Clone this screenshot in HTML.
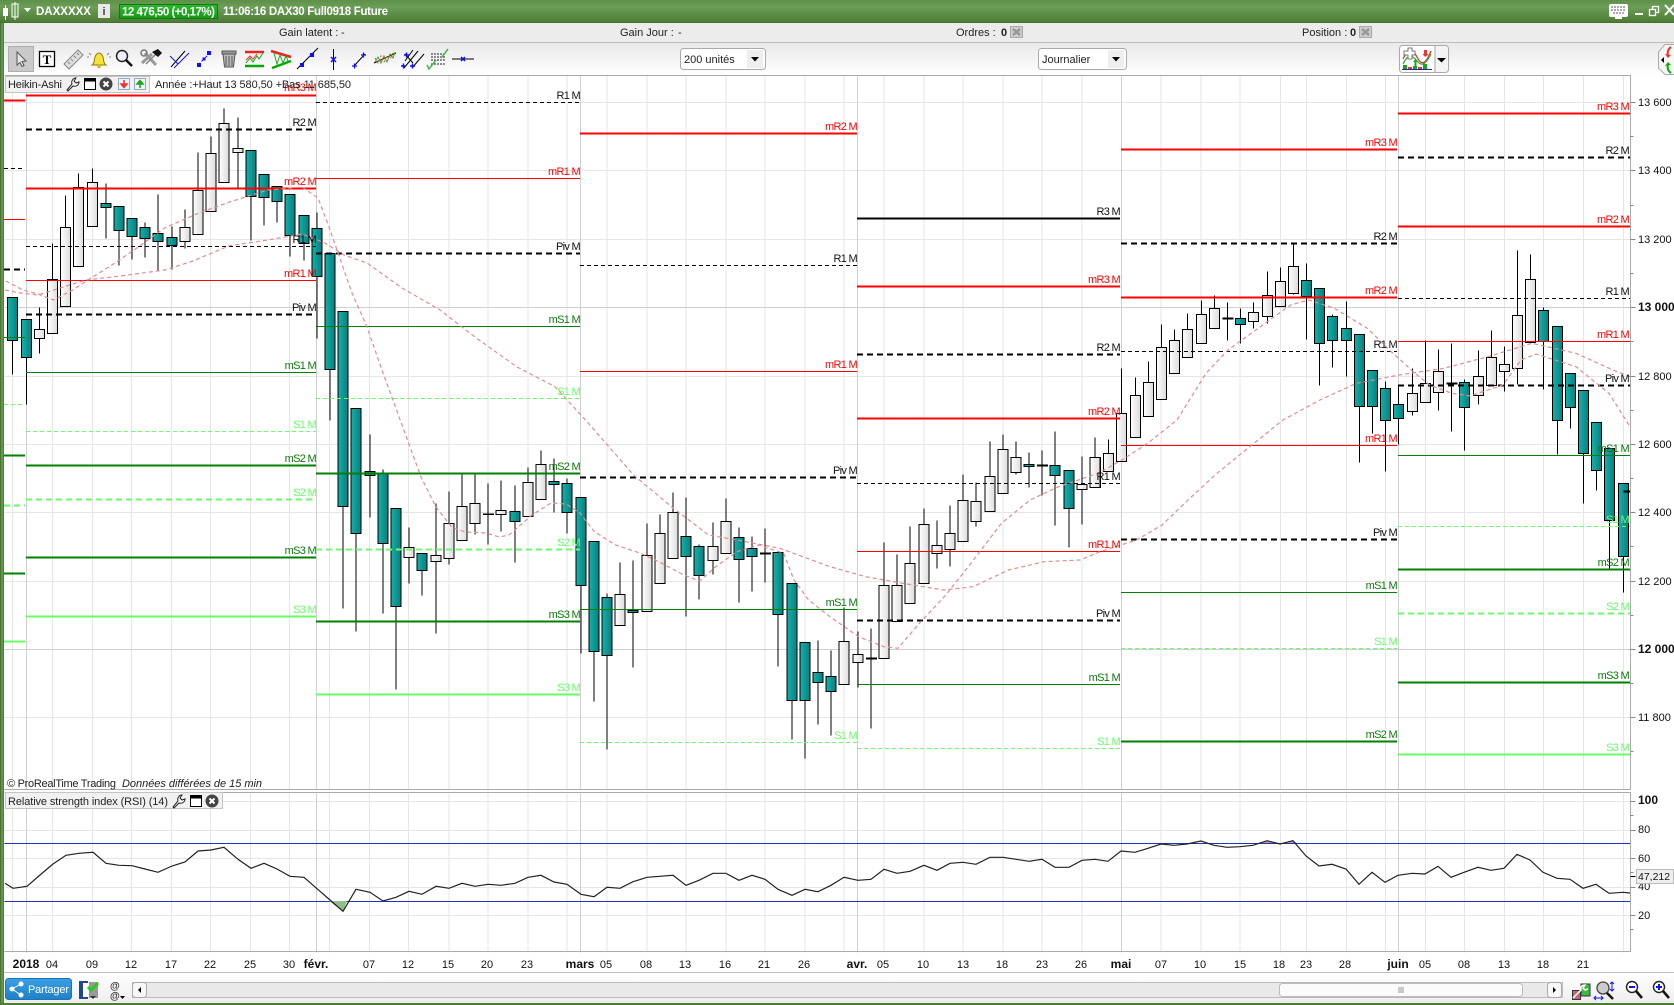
<!DOCTYPE html>
<html lang="fr"><head><meta charset="utf-8"><title>DAXXXXX</title>
<style>
html,body{margin:0;padding:0;background:#fff;width:1674px;height:1005px;overflow:hidden}
svg{display:block;font-family:"Liberation Sans",sans-serif}
.c rect.t{fill:url(#gt);stroke:#000}
.c rect.w{fill:url(#gw);stroke:#000}
.crisp{shape-rendering:crispEdges}
.lv path{fill:none}
.r1{stroke:#f00;stroke-width:1}.r2{stroke:#f00;stroke-width:2}
.k0{stroke:#000;stroke-width:2}
.k1{stroke:#000;stroke-width:1;stroke-dasharray:4 3}.k2{stroke:#000;stroke-width:2;stroke-dasharray:6 4}
.g1{stroke:#008000;stroke-width:1}.g2{stroke:#008000;stroke-width:2}
.l1{stroke:#66ff66;stroke-width:1;stroke-dasharray:4 3}.l2{stroke:#66ff66;stroke-width:2;stroke-dasharray:6 4}.l3{stroke:#66ff66;stroke-width:2}
.lb text{font-size:11px;letter-spacing:-.7px;text-anchor:end}
.tr{fill:#f00}.tk{fill:#111}.tg{fill:#0a7a0a}.tl{fill:#66ff66}
.ax text{font-size:11px;fill:#111}
.dt text{font-size:11px;fill:#111;text-anchor:middle}
.dt text.b{font-weight:bold;font-size:12px}
.ui text{font-size:11px;fill:#222}
</style></head><body>
<svg width="1674" height="1005" viewBox="0 0 1674 1005" xmlns="http://www.w3.org/2000/svg">
<defs>
<linearGradient id="gt" x1="0" x2="1" y1="0" y2="0"><stop offset="0" stop-color="#16b0aa"/><stop offset="1" stop-color="#07807f"/></linearGradient>
<linearGradient id="gw" x1="0" x2="1" y1="0" y2="0"><stop offset="0" stop-color="#ffffff"/><stop offset="1" stop-color="#dcdcdc"/></linearGradient>
<linearGradient id="gtop" x1="0" x2="0" y1="0" y2="1"><stop offset="0" stop-color="#5f9049"/><stop offset=".3" stop-color="#6b9e57"/><stop offset=".95" stop-color="#4e7c36"/><stop offset="1" stop-color="#3c6626"/></linearGradient>
<linearGradient id="gbar" x1="0" x2="0" y1="0" y2="1"><stop offset="0" stop-color="#e9e9e9"/><stop offset="1" stop-color="#ffffff"/></linearGradient>
<linearGradient id="gbot" x1="0" x2="0" y1="0" y2="1"><stop offset="0" stop-color="#ffffff"/><stop offset="1" stop-color="#eeeeee"/></linearGradient>
<linearGradient id="gpr" x1="0" x2="0" y1="0" y2="1"><stop offset="0" stop-color="#2cb82c"/><stop offset="1" stop-color="#149a16"/></linearGradient>
<linearGradient id="gsh" x1="0" x2="0" y1="0" y2="1"><stop offset="0" stop-color="#3aa0e4"/><stop offset="1" stop-color="#1f80c8"/></linearGradient>
<linearGradient id="gleft" x1="0" x2="1" y1="0" y2="0"><stop offset="0" stop-color="#3c6a28"/><stop offset=".5" stop-color="#6f9e5a"/><stop offset="1" stop-color="#477530"/></linearGradient>
<clipPath id="chartclip"><rect x="4" y="75" width="1626" height="714"/></clipPath>
</defs>

<!-- page base -->
<rect width="1674" height="1005" fill="#fff"/>

<!-- chart grid -->
<g class="crisp" transform="translate(.5 .5)">
<path transform="translate(-1 0) scale(1.0006 1)" d="M13 75V789M53 75V789M93 75V789M132 75V789M172 75V789M211 75V789M251 75V789M290 75V789M330 75V789M370 75V789M409 75V789M449 75V789M488 75V789M528 75V789M567 75V789M607 75V789M647 75V789M686 75V789M726 75V789M765 75V789M805 75V789M844 75V789M884 75V789M924 75V789M963 75V789M1003 75V789M1042 75V789M1082 75V789M1161 75V789M1201 75V789M1240 75V789M1280 75V789M1306 75V789M1346 75V789M1385 75V789M1425 75V789M1464 75V789M1504 75V789M1543 75V789M1583 75V789M1623 75V789" stroke="#e6e6e6" fill="none"/>
<path transform="translate(-1 0) scale(1.0006 1)" d="M13 793V952M53 793V952M93 793V952M132 793V952M172 793V952M211 793V952M251 793V952M290 793V952M330 793V952M370 793V952M409 793V952M449 793V952M488 793V952M528 793V952M567 793V952M607 793V952M647 793V952M686 793V952M726 793V952M765 793V952M805 793V952M844 793V952M884 793V952M924 793V952M963 793V952M1003 793V952M1042 793V952M1082 793V952M1161 793V952M1201 793V952M1240 793V952M1280 793V952M1306 793V952M1346 793V952M1385 793V952M1425 793V952M1464 793V952M1504 793V952M1543 793V952M1583 793V952M1623 793V952" stroke="#e6e6e6" fill="none"/>
<path d="M4 102H1630M4 170H1630M4 239H1630M4 376H1630M4 444H1630M4 512H1630M4 581H1630M4 717H1630" stroke="#e6e6e6" fill="none"/>
<path d="M4 307H1630M4 649H1630" stroke="#cfcfcf" fill="none"/>
<path d="M4 801H1630M4 830H1630M4 858H1630M4 887H1630M4 915H1630" stroke="#e6e6e6" fill="none"/>
<path d="M26 75V789M316 75V789M580 75V789M857 75V789M1121 75V789M1398 75V789M26 793V952M316 793V952M580 793V952M857 793V952M1121 793V952M1398 793V952" stroke="#d0d0d0" fill="none"/>
</g>

<!-- candles -->
<g class="c crisp" transform="translate(-.3 .5) scale(1.0005 1)" clip-path="url(#chartclip)">
<path stroke="#000" fill="none" d="M13 297V374M27 319V404M40 307V353M53 243V333M66 195V306M79 173V266M93 168V226M106 183V238M119 206V265M132 218V259M145 222V257M158 194V271M172 226V269M185 209V248M198 152V234M211 136V211M224 108V182M238 117V187M251 150V240M264 174V225M277 186V222M290 194V256M304 215V260M317 212V338M330 253V420M343 311V608M356 408V631M370 434V517M383 469V613M396 508V689M409 527V583M422 553V595M436 503V633M449 491V564M462 473V540M475 473V534M488 483V544M501 480V531M515 485V562M528 467V516M541 450V499M554 458V512M567 478V533M581 497V653M594 541V701M607 593V749M620 562V625M633 560V667M647 523V611M660 514V583M673 492V558M686 497V616M699 544V599M713 522V574M726 498V553M739 527V602M752 536V591M765 528V582M778 552V666M792 583V739M805 642V758M818 640V724M831 650V735M844 607V684M858 631V687M871 628V728M884 542V658M897 554V621M910 526V603M924 508V583M937 520V568M950 505V566M963 474V541M976 482V526M990 441V511M1003 434V493M1016 441V474M1029 452V487M1042 450V495M1055 431V525M1069 470V547M1082 456V524M1095 437V487M1108 439V471M1121 368V461M1135 377V437M1148 361V416M1161 324V399M1174 329V373M1187 313V357M1201 300V343M1214 295V328M1227 302V340M1240 308V343M1253 302V328M1267 271V323M1280 267V306M1293 243V294M1306 263V339M1319 288V385M1332 314V367M1346 301V376M1359 334V462M1372 370V433M1385 381V471M1398 385V444M1412 368V415M1425 340V402M1438 349V410M1451 343V431M1464 379V450M1478 350V404M1491 330V385M1504 346V391M1517 250V384M1530 254V342M1543 307V389M1557 326V454M1570 373V428M1583 390V503M1596 422V490M1609 448V568M1623 483V592"/>
<rect class="t" x="8" y="297" width="10" height="43"/><rect class="t" x="22" y="319" width="10" height="38"/><rect class="w" x="35" y="329" width="10" height="9"/><rect class="w" x="48" y="279" width="10" height="54"/><rect class="w" x="61" y="227" width="10" height="79"/><rect class="w" x="74" y="187" width="10" height="79"/><rect class="w" x="88" y="182" width="10" height="44"/><rect class="t" x="101" y="203" width="10" height="4"/><rect class="t" x="114" y="206" width="10" height="24"/><rect class="t" x="127" y="218" width="10" height="18"/><rect class="t" x="140" y="227" width="10" height="11"/><rect class="t" x="153" y="233" width="10" height="8"/><rect class="t" x="167" y="237" width="10" height="8"/><rect class="w" x="180" y="227" width="10" height="14"/><rect class="w" x="193" y="190" width="10" height="44"/><rect class="w" x="206" y="153" width="10" height="58"/><rect class="w" x="219" y="123" width="10" height="59"/><rect class="w" x="233" y="148" width="10" height="4"/><rect class="t" x="246" y="150" width="10" height="46"/><rect class="t" x="259" y="174" width="10" height="23"/><rect class="t" x="272" y="186" width="10" height="15"/><rect class="t" x="285" y="194" width="10" height="41"/><rect class="t" x="299" y="215" width="10" height="28"/><rect class="t" x="312" y="228" width="10" height="48"/><rect class="t" x="325" y="253" width="10" height="116"/><rect class="t" x="338" y="311" width="10" height="195"/><rect class="t" x="351" y="408" width="10" height="125"/><rect class="t" x="365" y="471" width="10" height="4"/><rect class="t" x="378" y="473" width="10" height="70"/><rect class="t" x="391" y="508" width="10" height="98"/><rect class="w" x="404" y="547" width="10" height="10"/><rect class="t" x="417" y="553" width="10" height="17"/><rect class="w" x="431" y="555" width="10" height="6"/><rect class="w" x="444" y="523" width="10" height="35"/><rect class="w" x="457" y="506" width="10" height="34"/><rect class="w" x="470" y="503" width="10" height="20"/><rect x="483" y="513" width="11" height="1.5" fill="#000"/><rect class="w" x="496" y="510" width="10" height="4"/><rect class="t" x="510" y="511" width="10" height="10"/><rect class="w" x="523" y="482" width="10" height="34"/><rect class="w" x="536" y="464" width="10" height="35"/><rect class="t" x="549" y="481" width="10" height="3"/><rect class="t" x="562" y="483" width="10" height="29"/><rect class="t" x="576" y="497" width="10" height="88"/><rect class="t" x="589" y="541" width="10" height="110"/><rect class="t" x="602" y="597" width="10" height="58"/><rect class="w" x="615" y="594" width="10" height="31"/><rect class="t" x="628" y="610" width="10" height="2"/><rect class="w" x="642" y="555" width="10" height="56"/><rect class="w" x="655" y="533" width="10" height="50"/><rect class="w" x="668" y="512" width="10" height="46"/><rect class="t" x="681" y="536" width="10" height="20"/><rect class="t" x="694" y="546" width="10" height="29"/><rect class="w" x="708" y="546" width="10" height="14"/><rect class="w" x="721" y="521" width="10" height="32"/><rect class="t" x="734" y="537" width="10" height="22"/><rect class="t" x="747" y="548" width="10" height="8"/><rect x="760" y="552" width="11" height="2" fill="#000"/><rect class="t" x="773" y="552" width="10" height="62"/><rect class="t" x="787" y="583" width="10" height="117"/><rect class="t" x="800" y="642" width="10" height="58"/><rect class="t" x="813" y="672" width="10" height="10"/><rect class="t" x="826" y="676" width="10" height="15"/><rect class="w" x="839" y="641" width="10" height="43"/><rect class="w" x="853" y="654" width="10" height="8"/><rect x="866" y="657" width="11" height="2" fill="#000"/><rect class="w" x="879" y="585" width="10" height="73"/><rect class="w" x="892" y="585" width="10" height="36"/><rect class="w" x="905" y="563" width="10" height="40"/><rect class="w" x="919" y="524" width="10" height="59"/><rect class="w" x="932" y="545" width="10" height="8"/><rect class="w" x="945" y="533" width="10" height="16"/><rect class="w" x="958" y="500" width="10" height="41"/><rect class="w" x="971" y="501" width="10" height="20"/><rect class="w" x="985" y="476" width="10" height="35"/><rect class="w" x="998" y="449" width="10" height="44"/><rect class="w" x="1011" y="457" width="10" height="15"/><rect class="t" x="1024" y="464" width="10" height="2"/><rect x="1037" y="464" width="11" height="2" fill="#000"/><rect class="t" x="1050" y="465" width="10" height="10"/><rect class="t" x="1064" y="470" width="10" height="38"/><rect class="w" x="1077" y="484" width="10" height="5"/><rect class="w" x="1090" y="457" width="10" height="30"/><rect class="w" x="1103" y="453" width="10" height="18"/><rect class="w" x="1116" y="413" width="10" height="48"/><rect class="w" x="1130" y="395" width="10" height="42"/><rect class="w" x="1143" y="382" width="10" height="34"/><rect class="w" x="1156" y="347" width="10" height="52"/><rect class="w" x="1169" y="340" width="10" height="33"/><rect class="w" x="1182" y="329" width="10" height="28"/><rect class="w" x="1196" y="314" width="10" height="29"/><rect class="w" x="1209" y="308" width="10" height="20"/><rect x="1222" y="317" width="11" height="2" fill="#000"/><rect class="t" x="1235" y="318" width="10" height="6"/><rect class="w" x="1248" y="312" width="10" height="9"/><rect class="w" x="1262" y="295" width="10" height="21"/><rect class="w" x="1275" y="281" width="10" height="25"/><rect class="w" x="1288" y="266" width="10" height="27"/><rect class="t" x="1301" y="280" width="10" height="16"/><rect class="t" x="1314" y="288" width="10" height="55"/><rect class="t" x="1327" y="316" width="10" height="24"/><rect class="t" x="1341" y="328" width="10" height="12"/><rect class="t" x="1354" y="334" width="10" height="72"/><rect class="t" x="1367" y="370" width="10" height="36"/><rect class="t" x="1380" y="388" width="10" height="32"/><rect class="t" x="1393" y="404" width="10" height="14"/><rect class="w" x="1407" y="393" width="10" height="18"/><rect class="w" x="1420" y="383" width="10" height="19"/><rect class="w" x="1433" y="371" width="10" height="21"/><rect x="1446" y="382" width="11" height="2" fill="#000"/><rect class="t" x="1459" y="382" width="10" height="25"/><rect class="w" x="1473" y="376" width="10" height="19"/><rect class="w" x="1486" y="357" width="10" height="28"/><rect class="w" x="1499" y="364" width="10" height="7"/><rect class="w" x="1512" y="315" width="10" height="53"/><rect class="w" x="1525" y="279" width="10" height="63"/><rect class="t" x="1538" y="310" width="10" height="31"/><rect class="t" x="1552" y="326" width="10" height="94"/><rect class="t" x="1565" y="373" width="10" height="34"/><rect class="t" x="1578" y="390" width="10" height="63"/><rect class="t" x="1591" y="422" width="10" height="48"/><rect class="t" x="1604" y="448" width="10" height="72"/><rect class="t" x="1618" y="483" width="10" height="73"/>
<rect x="1623" y="490" width="7" height="2" fill="#000"/>
</g>

<!-- pivot level lines -->
<g clip-path="url(#chartclip)"><g class="lv crisp" transform="translate(0 .5)">
<!-- region 0 -->
<path class="r2" d="M4 100H25"/><path class="k1" d="M4 168H25"/><path class="r1" d="M4 219H25"/><path class="k2" d="M4 269H25"/><path class="g1" d="M4 337H25"/><path class="l1" d="M4 404H25"/><path class="g2" d="M4 455H25"/><path class="l2" d="M4 505H25"/><path class="g2" d="M4 573H25"/><path class="l3" d="M4 641H25"/>
<!-- region 1 -->
<path class="r2" d="M26 95H316"/><path class="k2" d="M26 129H316"/><path class="r2" d="M26 188H316"/><path class="k1" d="M26 246H316"/><path class="r1" d="M26 280H316"/><path class="k2" d="M26 314H316"/><path class="g1" d="M26 372H316"/><path class="l1" d="M26 431H316"/><path class="g2" d="M26 465H316"/><path class="l2" d="M26 499H316"/><path class="g2" d="M26 557H316"/><path class="l3" d="M26 616H316"/>
<!-- region 2 -->
<path class="k1" d="M316 102H580"/><path class="r1" d="M316 178H580"/><path class="k2" d="M316 253H580"/><path class="g1" d="M316 326H580"/><path class="l1" d="M316 398H580"/><path class="g2" d="M316 473H580"/><path class="l2" d="M316 549H580"/><path class="g2" d="M316 621H580"/><path class="l3" d="M316 694H580"/>
<!-- region 3 -->
<path class="r2" d="M580 133H857"/><path class="k1" d="M580 265H857"/><path class="r1" d="M580 371H857"/><path class="k2" d="M580 477H857"/><path class="g1" d="M580 609H857"/><path class="l1" d="M580 742H857"/>
<!-- region 4 -->
<path class="k0" d="M857 218H1120"/><path class="r2" d="M857 286H1120"/><path class="k2" d="M857 354H1120"/><path class="r2" d="M857 418H1120"/><path class="k1" d="M857 483H1120"/><path class="r1" d="M857 551H1120"/><path class="k2" d="M857 620H1120"/><path class="g1" d="M857 684H1120"/><path class="l1" d="M857 748H1120"/>
<!-- region 5 -->
<path class="r2" d="M1121 149H1397"/><path class="k2" d="M1121 243H1397"/><path class="r2" d="M1121 297H1397"/><path class="k1" d="M1121 351H1397"/><path class="r1" d="M1121 445H1397"/><path class="k2" d="M1121 539H1397"/><path class="g1" d="M1121 592H1397"/><path class="l1" d="M1121 648H1397"/><path class="g2" d="M1121 741H1397"/>
<!-- region 6 -->
<path class="r2" d="M1398 113H1630"/><path class="k2" d="M1398 157H1630"/><path class="r2" d="M1398 226H1630"/><path class="k1" d="M1398 298H1630"/><path class="r1" d="M1398 341H1630"/><path class="k2" d="M1398 385H1630"/><path class="g1" d="M1398 455H1630"/><path class="l1" d="M1398 526H1630"/><path class="g2" d="M1398 569H1630"/><path class="l2" d="M1398 613H1630"/><path class="g2" d="M1398 682H1630"/><path class="l3" d="M1398 754H1630"/>
</g></g>

<!-- moving averages -->
<g fill="none" stroke="#e38c8c" stroke-width="1.2" stroke-dasharray="4 3" clip-path="url(#chartclip)">
<polyline points="5.7,281 23,290 38,294 53.6,300 72.7,290 88,280 115,263 134,250 164.6,228 199,213 229.6,202 268,190 302,187 318,198 329,227 337,250 352,293 367,327 383,373 402,425 421,477 436,507 451.6,527 465,532 486,533 499.4,537 509,535 532,515 551,503 566,504 580,513 594.3,531.7 615.7,545 640.7,553.3 662,563.3 683.6,575 699.6,581 715.7,566.7 737,551.7 758.6,545 783.6,553.3 794,580 808.6,600 830,616.7 858.6,636.7 883.6,646.7 898,648.3 919.3,623.3 944.3,596.7 965.7,570 983.6,546.7 1001.4,523.3 1030,500 1058.6,486.7 1098,473.3 1122,460 1147.6,443.3 1177,420 1206,373.3 1228,350 1246.5,336.7 1272,318.3 1290.5,305 1308.8,300 1334.4,308.3 1367.4,328.3 1389.4,350 1415,373.3 1429.7,385 1451.6,393.3 1470,396 1503,385 1521,360 1536,354 1576,366.7 1609,393.3 1630,426.7"/>
<polyline points="5,290 20,293 38,295 60,288 86,280 115,276.7 164.6,270 191,261.7 229.6,245.7 268,240 302,234 325,243 344,255 367,263 402,288 440,310 474.5,336.7 516.6,366.7 555,386.7 587,421.7 633.6,475 673,508 708.6,535 737,540 780,548.3 830,566.7 865.7,576.7 901,583 944,590 973,586.7 1008.6,570 1044,561.7 1080,560 1100,551.7 1136.6,540 1162,525 1188,500 1217,473.3 1254,443.3 1283,420 1320,400 1356.4,383.3 1399,375 1444,368.3 1488,356.7 1532,343.3 1576,353.3 1613,370 1630,376.7"/>
</g>

<!-- level labels -->
<g class="lb" transform="translate(0 -1)">
<g text-anchor="end">
<text class="tr" x="316" y="92">mR3 M</text><text class="tk" x="316" y="127">R2 M</text><text class="tr" x="316" y="186">mR2 M</text><text class="tk" x="316" y="244">R1 M</text><text class="tr" x="316" y="278">mR1 M</text><text class="tk" x="316" y="312">Piv M</text><text class="tg" x="316" y="370">mS1 M</text><text class="tl" x="316" y="429">S1 M</text><text class="tg" x="316" y="463">mS2 M</text><text class="tl" x="316" y="497">S2 M</text><text class="tg" x="316" y="555">mS3 M</text><text class="tl" x="316" y="614">S3 M</text>
<text class="tk" x="580" y="100">R1 M</text><text class="tr" x="580" y="176">mR1 M</text><text class="tk" x="580" y="251">Piv M</text><text class="tg" x="580" y="324">mS1 M</text><text class="tl" x="580" y="396">S1 M</text><text class="tg" x="580" y="471">mS2 M</text><text class="tl" x="580" y="547">S2 M</text><text class="tg" x="580" y="619">mS3 M</text><text class="tl" x="580" y="692">S3 M</text>
<text class="tr" x="857" y="131">mR2 M</text><text class="tk" x="857" y="263">R1 M</text><text class="tr" x="857" y="369">mR1 M</text><text class="tk" x="857" y="475">Piv M</text><text class="tg" x="857" y="607">mS1 M</text><text class="tl" x="857" y="740">S1 M</text>
<text class="tk" x="1120" y="216">R3 M</text><text class="tr" x="1120" y="284">mR3 M</text><text class="tk" x="1120" y="352">R2 M</text><text class="tr" x="1120" y="416">mR2 M</text><text class="tk" x="1120" y="481">R1 M</text><text class="tr" x="1120" y="549">mR1 M</text><text class="tk" x="1120" y="618">Piv M</text><text class="tg" x="1120" y="682">mS1 M</text><text class="tl" x="1120" y="746">S1 M</text>
<text class="tr" x="1397" y="147">mR3 M</text><text class="tk" x="1397" y="241">R2 M</text><text class="tr" x="1397" y="295">mR2 M</text><text class="tk" x="1397" y="349">R1 M</text><text class="tr" x="1397" y="443">mR1 M</text><text class="tk" x="1397" y="537">Piv M</text><text class="tg" x="1397" y="590">mS1 M</text><text class="tl" x="1397" y="646">S1 M</text><text class="tg" x="1397" y="739">mS2 M</text>
<text class="tr" x="1629" y="111">mR3 M</text><text class="tk" x="1629" y="155">R2 M</text><text class="tr" x="1629" y="224">mR2 M</text><text class="tk" x="1629" y="296">R1 M</text><text class="tr" x="1629" y="339">mR1 M</text><text class="tk" x="1629" y="383">Piv M</text><text class="tg" x="1629" y="453">mS1 M</text><text class="tl" x="1629" y="524">S1 M</text><text class="tg" x="1629" y="567">mS2 M</text><text class="tl" x="1629" y="611">S2 M</text><text class="tg" x="1629" y="680">mS3 M</text><text class="tl" x="1629" y="752">S3 M</text>
</g></g>

<!-- RSI -->
<g class="crisp" transform="translate(.5 .5)"><path d="M4 843H1630M4 901H1630" stroke="#2233bb" stroke-width="1.3" fill="none"/></g>
<polygon points="329,901 343,911.5 347,901" fill="#8fbf8f"/>
<polygon points="1262,843 1267,840.7 1273,843" fill="#c99"/><polygon points="1288,843 1293,840.7 1297,843" fill="#c99"/>
<polyline fill="none" stroke="#222" stroke-width="1.2" points="5,883.3 13,888.3 27,886.3 40,875 53,864 66,855.3 79,853.3 93,852.3 106,863.3 119,865.3 132,865.7 145,869 158,872.3 172,866 185,862 198,851 211,850 224,847.3 238,859.3 251,868.3 264,863.3 277,869 290,876.3 304,877.3 317,888.7 330,900 343,911.3 356,889.3 370,892.3 383,901 396,897.3 409,891.3 422,894.3 436,886.3 449,888.3 462,883.3 475,886.3 488,884.3 501,885.3 515,883.3 528,877.3 541,875.3 554,882 567,884.3 581,894.3 594,896.7 607,887.3 620,888.3 633,881.7 647,877.3 660,876.3 673,875.3 686,885.3 699,880.3 713,873.3 726,873.3 739,880.3 752,875.3 765,879.3 778,889.3 792,895.3 805,889.3 818,891.7 831,885.3 844,877.3 858,880.3 871,879.3 884,869.3 897,873.3 910,871.3 924,865.3 937,870.3 950,863.3 963,862.3 976,864.3 990,857.3 1003,857.3 1016,859.3 1029,861.3 1042,859.3 1055,867.3 1069,867.3 1082,860.3 1095,859.3 1108,861.3 1121,851 1135,852.3 1148,848.3 1161,844 1174,845.3 1187,844 1201,841 1214,845.3 1227,847.3 1240,846.7 1253,845.3 1267,840.7 1280,844 1293,840.7 1306,856 1319,866 1332,864.3 1346,869 1359,884.3 1372,872.3 1385,882.3 1398,875.3 1412,873.3 1425,874 1438,866.3 1451,877.3 1464,872.3 1478,867.3 1491,870.3 1504,868.3 1517,854.3 1530,860 1543,872.3 1557,878.3 1570,879.3 1583,888.3 1596,884.3 1609,893.3 1623,892.3 1630,893"/>

<!-- panel frames -->
<g class="crisp" transform="translate(.5 .5)" fill="none" stroke="#aaaaaa">
<path d="M4 75H1630V789H4"/><path d="M4 792H1630V951H4"/>
<path d="M4 972H1674" stroke="#bdbdbd"/>
</g>

<!-- axis ticks -->
<g class="crisp" transform="translate(.5 .5)" stroke="#888" fill="none">
<path d="M1630 102h5M1630 170h5M1630 239h5M1630 307h5M1630 376h5M1630 444h5M1630 512h5M1630 581h5M1630 649h5M1630 717h5M1630 136h3M1630 205h3M1630 273h3M1630 341h3M1630 410h3M1630 478h3M1630 546h3M1630 615h3M1630 683h3M1630 751h3"/>
<path d="M1630 801h5M1630 830h5M1630 858h5M1630 887h5M1630 915h5M1630 815h3M1630 872h3M1630 929h3"/>
<path d="M1630 876h5" stroke="#000"/>
</g>
<g class="ax">
<text x="1638" y="106">13 600</text><text x="1638" y="174">13 400</text><text x="1638" y="243">13 200</text><text x="1638" y="311" font-weight="bold" style="font-size:12px">13 000</text><text x="1638" y="380">12 800</text><text x="1638" y="448">12 600</text><text x="1638" y="516">12 400</text><text x="1638" y="585">12 200</text><text x="1638" y="653" font-weight="bold" style="font-size:12px">12 000</text><text x="1638" y="721">11 800</text>
<text x="1638" y="804" font-weight="bold" style="font-size:12px">100</text><text x="1638" y="833">80</text><text x="1638" y="862">60</text><text x="1638" y="890">40</text><text x="1638" y="919">20</text>
</g>
<rect x="1636.5" y="869.5" width="37" height="14" fill="#eeeeee" stroke="#bbbbbb" class="crisp"/>
<g class="ax"><text x="1638" y="880" style="font-size:10.5px">47,212</text></g>

<!-- date axis -->
<g class="dt">
<text class="b" x="26" y="968">2018</text><text x="52" y="968">04</text><text x="92" y="968">09</text><text x="131" y="968">12</text><text x="171" y="968">17</text><text x="210" y="968">22</text><text x="250" y="968">25</text><text x="289" y="968">30</text><text class="b" x="316" y="968">févr.</text><text x="369" y="968">07</text><text x="408" y="968">12</text><text x="448" y="968">15</text><text x="487" y="968">20</text><text x="527" y="968">23</text><text class="b" x="580" y="968">mars</text><text x="606" y="968">05</text><text x="646" y="968">08</text><text x="685" y="968">13</text><text x="725" y="968">16</text><text x="764" y="968">21</text><text x="804" y="968">26</text><text class="b" x="857" y="968">avr.</text><text x="883" y="968">05</text><text x="923" y="968">10</text><text x="963" y="968">13</text><text x="1002" y="968">18</text><text x="1042" y="968">23</text><text x="1081" y="968">26</text><text class="b" x="1121" y="968">mai</text><text x="1161" y="968">07</text><text x="1200" y="968">10</text><text x="1240" y="968">15</text><text x="1279" y="968">18</text><text x="1306" y="968">23</text><text x="1345" y="968">28</text><text class="b" x="1398" y="968">juin</text><text x="1425" y="968">05</text><text x="1464" y="968">08</text><text x="1504" y="968">13</text><text x="1543" y="968">18</text><text x="1583" y="968">21</text>
</g>

<!-- footer text in chart -->
<g class="ui">
<text x="7" y="787" textLength="109">© ProRealTime Trading</text>
<text x="122" y="787" font-style="italic" textLength="140">Données différées de 15 min</text>
</g>

<!-- legend price -->
<rect x="5.5" y="76.5" width="144" height="16" fill="#f1f1f1" stroke="#c4c4c4" class="crisp"/>
<g class="ui"><text x="8" y="88" textLength="54">Heikin-Ashi</text>
<text x="155" y="88" textLength="196">Année :+Haut 13 580,50 +Bas 11 685,50</text></g>
<path d="M67 90l5-6c-1-3 1-6 4-6l-2 3 2 2 3-1c0 3-3 5-6 4l-5 5z" fill="#fff" stroke="#222" stroke-width="1"/>
<rect x="84.5" y="78.5" width="11" height="11" fill="#fff" stroke="#000"/><rect x="84" y="78" width="12" height="3.5" fill="#000"/>
<circle cx="106" cy="84" r="6.5" fill="#444"/><path d="M103.5 81.5l5 5m0-5l-5 5" stroke="#fff" stroke-width="2"/>
<rect x="118.5" y="78.5" width="11" height="11" fill="#eef3fa" stroke="#9ab"/><path d="M124 80v5M121 84h6l-3 3.5z" stroke="#e33" fill="#e33" stroke-width="1.5"/>
<rect x="134.5" y="78.5" width="11" height="11" fill="#eef3fa" stroke="#9ab"/><path d="M140 88v-5M137 84h6l-3-3.5z" stroke="#1a1" fill="#1a1" stroke-width="1.5"/>

<!-- legend rsi -->
<rect x="5.5" y="792.5" width="217" height="16" fill="#f1f1f1" stroke="#c4c4c4" class="crisp"/>
<g class="ui"><text x="8" y="805" textLength="160">Relative strength index (RSI) (14)</text></g>
<path d="M173 807l5-6c-1-3 1-6 4-6l-2 3 2 2 3-1c0 3-3 5-6 4l-5 5z" fill="#fff" stroke="#222" stroke-width="1"/>
<rect x="190.5" y="795.5" width="11" height="11" fill="#fff" stroke="#000"/><rect x="190" y="795" width="12" height="3.5" fill="#000"/>
<circle cx="212" cy="801" r="6.5" fill="#444"/><path d="M209.5 798.5l5 5m0-5l-5 5" stroke="#fff" stroke-width="2"/>

<!-- top bar -->
<rect x="0" y="0" width="1674" height="23" fill="url(#gtop)"/>
<rect x="3" y="8" width="5" height="8" fill="#fff"/><path d="M5.5 5v15" stroke="#fff"/><rect x="12" y="4" width="6" height="13" fill="#6b9e57" stroke="#fff"/><path d="M15 2v18" stroke="#fff"/>
<path d="M24 8h7l-3.500 4z" fill="#fff"/>
<text x="36" y="15" fill="#fff" font-weight="bold" style="font-size:11.5px">DAXXXXX</text>
<rect x="98" y="4" width="12" height="14" fill="#e8e8e8"/><text x="104" y="15" text-anchor="middle" font-weight="bold" fill="#445" style="font-size:11px">i</text>
<rect x="119.500" y="4.500" width="98" height="14" fill="url(#gpr)" stroke="#0c7e10" class="crisp"/>
<text x="122" y="15.500" fill="#fff" font-weight="bold" textLength="93" style="font-size:11.5px">12 476,50 (+0,17%)</text>
<text x="223" y="15" fill="#fff" font-weight="bold" textLength="165" style="font-size:11.500px">11:06:16  DAX30 Full0918 Future</text>
<rect x="1609" y="4" width="19" height="13" rx="2" fill="#fff"/><path d="M1611 7h15M1611 10h15M1613 13h11" stroke="#556" stroke-dasharray="2 1" fill="none"/><path d="M1615 17h7v2h-7z" fill="#fff"/>
<path d="M1635 14h8" stroke="#fff" stroke-width="2"/>
<rect x="1652.500" y="6.500" width="6" height="6" fill="none" stroke="#fff" stroke-width="1.300"/><rect x="1649.500" y="9.500" width="6" height="6" fill="#5f9049" stroke="#fff" stroke-width="1.300"/>
<path d="M1665 5l9 10m0-10l-9 10" stroke="#fff" stroke-width="2"/>

<!-- gain row -->
<rect x="4" y="23" width="1670" height="20" fill="#ececec"/>
<path d="M4 42.500H1674" stroke="#bdbdbd"/>
<g class="ui">
<text x="279" y="36">Gain latent :</text><text x="341" y="36">-</text>
<text x="620" y="36">Gain Jour :</text><text x="678" y="36">-</text>
<text x="956" y="36">Ordres :</text><text x="1001" y="36" font-weight="bold">0</text>
<text x="1302" y="36">Position :</text><text x="1350" y="36" font-weight="bold">0</text>
</g>
<rect x="1010.500" y="26.500" width="12" height="11" fill="#ccc" stroke="#aaa"/><path d="M1013 29l7 6m0-6l-7 6" stroke="#999" stroke-width="2.500"/>
<rect x="1359.500" y="26.500" width="12" height="11" fill="#ccc" stroke="#aaa"/><path d="M1362 29l7 6m0-6l-7 6" stroke="#999" stroke-width="2.500"/>

<!-- toolbar -->
<rect x="4" y="43" width="1670" height="32" fill="url(#gbar)"/>
<rect x="8.500" y="46.500" width="25" height="25" fill="#c9c9c9" stroke="#adadad"/>
<path d="M17 52l9 9-4 .5 2 4-2 1-2-4-3 2.500z" fill="#e8e8e8" stroke="#555"/>
<rect x="39.500" y="51.500" width="15" height="15" fill="#fff" stroke="#000" stroke-width="1.300"/><text x="47" y="64" text-anchor="middle" font-weight="bold" style="font-family:'Liberation Serif',serif;font-size:13px">T</text>
<path d="M64 64l14-14 5 5-14 14z" fill="#ddd" stroke="#888"/><path d="M68 62l2 2M71 59l2 2M74 56l2 2M77 53l2 2" stroke="#888"/>
<path d="M92 65c3-2 2-5 3-8 1-3 3-4 4-4s3 1 4 4c1 3 0 6 3 8z" fill="#f6e23a" stroke="#8a7a10"/><circle cx="99" cy="66.500" r="1.800" fill="#d8b820"/><path d="M89 53l2 2M109 53l-2 2M87 57h2M111 57h-2" stroke="#888"/>
<circle cx="122" cy="56" r="5.500" fill="#eef" stroke="#222" stroke-width="1.500"/><path d="M126 60l6 6" stroke="#111" stroke-width="2.500"/>
<path d="M145 53l11 12M142 63l10-9" stroke="#999" stroke-width="3"/><path d="M146 64l12-12" stroke="#888" stroke-width="1.500"/><path d="M152 52l6-3 4 4-4 4z" fill="#111"/><circle cx="144" cy="53" r="3" fill="none" stroke="#777" stroke-width="1.500"/>
<path d="M171 67l14-16" stroke="#000"/><path d="M170 56l8 8M174 68l15-15" stroke="#11f" fill="none"/>
<path d="M198 65l12-12" stroke="#11f" stroke-dasharray="3 2"/><rect x="197" y="63" width="4" height="4" fill="#11f"/><rect x="207" y="51" width="4" height="4" fill="#11f"/><rect x="202.500" y="57.500" width="3" height="3" fill="#11f"/>
<path d="M223 54h12l-1.500 13h-9z" fill="#bbb" stroke="#555"/><rect x="222" y="51" width="14" height="3" fill="#999" stroke="#555"/><path d="M226 56v10M229 56v10M232 56v10" stroke="#555"/>
<path d="M245 52h19" stroke="#e22" stroke-width="2.500"/><path d="M245 66h19" stroke="#0a0" stroke-width="2.500"/><path d="M246 63l4-5 3 4 4-6 2 3 4-6" stroke="#1a1" fill="none"/><path d="M246 60l4-4 3 3 4-5" stroke="#e33" fill="none"/>
<path d="M271 51l20 6" stroke="#e22" stroke-width="2.500" fill="none"/><path d="M272 68l19-7" stroke="#0a0" stroke-width="2.500" fill="none"/><path d="M274 53l3 11 3-9 3 8 3-7 2 5" stroke="#2a2" fill="none"/>
<path d="M297 69l21-21" stroke="#000"/><rect x="300" y="63" width="4" height="4" fill="#11f"/><rect x="310" y="53" width="4" height="4" fill="#11f"/>
<path d="M333.500 49v21" stroke="#000"/><path d="M331 57l5 5m0-5l-5 5" stroke="#11f" stroke-width="1.500"/>
<path d="M354 66l11-12" stroke="#000"/><path d="M352 66h5M354.500 63.500v5M361 55h5M363.500 52.500v5" stroke="#11f" stroke-width="1.300"/>
<path d="M374 63l22-10" stroke="#000"/><path d="M375 62l3-5 3 6 3-7 3 6 3-8 3 4 2-6" stroke="#3a3" fill="none"/><path d="M375 58l3 5 3-7 3 6 3-6 3 3 4-8" stroke="#e44" stroke-dasharray="2 2" fill="none"/>
<path d="M405 61l8-11M404 68l14-17M412 68l12-14M405 54l8 9" stroke="#000" fill="none"/><path d="M404 55h5M406.500 52.500v5M401 66h5M403.500 63.500v5M410 66h5M412.500 63.500v5" stroke="#11f" stroke-width="1.500"/>
<path d="M431 54h14M431 57h14M431 60h14M431 64h14" stroke="#222" stroke-dasharray="2 1"/><path d="M427 65l2 4 7-9" stroke="#4b4" fill="none" stroke-width="1.500"/><path d="M441 58l4-5 3-4" stroke="#4b4" stroke-width="1.500" fill="none"/>
<path d="M452 59h22" stroke="#000"/><path d="M461 57l4 4m0-4l-4 4" stroke="#11f" stroke-width="1.500"/>

<!-- selects -->
<rect x="680.500" y="48.500" width="85" height="21" rx="3" fill="#fff" stroke="#aaa"/><rect x="747" y="50" width="16" height="18" fill="#eeeeee"/><path d="M751 57h8l-4 4.500z" fill="#000"/>
<g class="ui"><text x="684" y="63">200 unités</text></g>
<rect x="1038.500" y="48.500" width="88" height="21" rx="3" fill="#fff" stroke="#aaa"/><rect x="1108" y="50" width="16" height="18" fill="#eeeeee"/><path d="M1112 57h8l-4 4.500z" fill="#000"/>
<g class="ui"><text x="1042" y="63">Journalier</text></g>

<!-- indicator button -->
<rect x="1399.500" y="45.500" width="49" height="27" rx="3" fill="#f4f4f4" stroke="#aaa"/><rect x="1400" y="46" width="34" height="26" rx="3" fill="#fff"/><path d="M1435 46v26" stroke="#aaa"/><path d="M1437 58h9l-4.500 4.500z" fill="#000"/>
<path d="M1403 59c6-12 10-10 14-2s8 9 14-6" stroke="#d33" fill="none" stroke-width="1.300"/><path d="M1403 64c6-12 10-8 14-3s8 5 14-7" stroke="#3a3" fill="none" stroke-width="1.300"/>
<path d="M1404 51h4v-3h4v3h3v4h-3v4h-4v-4h-4z" fill="#fff" stroke="#777"/>
<path d="M1413 62l2.500-3 2.500 3h-1.500v4h-2v-4z" fill="#1a1"/><path d="M1424 50h3v4h1.500l-3 3-3-3h1.500z" fill="#e33"/>
<path d="M1402 69.500h30" stroke="#22a"/><rect x="1403" y="65" width="4" height="4" fill="#1a1"/><rect x="1408" y="67" width="4" height="2" fill="#e33"/><rect x="1413" y="66" width="4" height="3" fill="#1a1"/><rect x="1418" y="67" width="4" height="2" fill="#e33"/><rect x="1423" y="64" width="4" height="5" fill="#1a1"/>

<!-- right tab -->
<polygon points="1674.500,44.500 1665,44.500 1658.500,52 1658.500,68 1665,74.500 1674.500,74.500" fill="#f6f6f6" stroke="#aaa"/>
<path d="M1664 57v6l-3-3z" fill="#000"/>
<path d="M1671 47c-3 2-4 5-3 10" stroke="#e33" stroke-width="2" fill="none"/><path d="M1665 54l3 4 3-3z" fill="#e33"/>
<path d="M1671 73c-3-2-4-5-3-9" stroke="#1a1" stroke-width="2" fill="none"/><path d="M1665 66l3-4 3 3z" fill="#1a1"/>

<!-- bottom bar -->
<rect x="4" y="973" width="1670" height="30" fill="url(#gbot)"/>
<rect x="5.500" y="978.500" width="66" height="21" rx="3" fill="url(#gsh)" stroke="#1b74b5"/>
<circle cx="12" cy="989" r="2.500" fill="#fff"/><circle cx="21" cy="984" r="2.500" fill="#fff"/><circle cx="21" cy="995" r="2.500" fill="#fff"/><path d="M12 989l9-5M12 989l9 6" stroke="#fff"/>
<text x="28" y="993" fill="#fff" textLength="41" style="font-size:11px">Partager</text>
<rect x="79" y="981" width="9" height="18" fill="#1f4a8a"/><rect x="83" y="983" width="5" height="14" fill="#fff"/><rect x="89" y="982" width="9" height="16" fill="#999"/>
<path d="M88 987l3 3 7-7" stroke="#2c2" stroke-width="3" fill="none"/><path d="M90 996h6l-3 3z" fill="#333"/>
<text x="110" y="989" style="font-size:10px;font-weight:bold" fill="#333">@</text>
<text x="110" y="999" style="font-size:10px;font-weight:bold" fill="#333">@</text><path d="M120 996h5l-2.500 3z" fill="#000"/>
<rect x="132.500" y="982.500" width="1430" height="15" fill="#e9e9e9" stroke="#bbb" class="crisp"/>
<rect x="132.500" y="982.500" width="14" height="15" rx="3" fill="#f8f8f8" stroke="#aaa"/><path d="M141 987v6l-3-3z" fill="#000"/>
<rect x="1547.500" y="982.500" width="14" height="15" rx="3" fill="#f8f8f8" stroke="#aaa"/><path d="M1553 987v6l3-3z" fill="#000"/>
<rect x="1279.500" y="983.500" width="243" height="13" rx="3" fill="#fbfbfb" stroke="#bbb"/><path d="M1398 988h6M1398 990h6M1398 992h6" stroke="#999"/>
<rect x="1581" y="984" width="9" height="12" fill="#3ebb3e" stroke="#334"/><rect x="1572.500" y="990.500" width="8" height="9" fill="#cc6666" stroke="#334"/><path d="M1573 998l8-8c-1-3 1-5 4-5l-2 3 2 2 3-1" stroke="#fff" stroke-width="1.500" fill="none"/>
<circle cx="1603" cy="988" r="6" fill="#ccc" stroke="#444" stroke-width="1.300"/><path d="M1607 993l6 6" stroke="#111" stroke-width="2.500"/><path d="M1612 982v9M1594 998h9M1610 984l2-2 2 2M1610 989l2 2 2-2M1596 996l-2 2 2 2M1601 996l2 2-2 2" stroke="#11f" fill="none"/>
<circle cx="1632" cy="987" r="5.500" fill="#fff" stroke="#222" stroke-width="1.400"/><path d="M1629 987h6" stroke="#11f" stroke-width="2"/><path d="M1636 991l6 7" stroke="#111" stroke-width="2.500"/>
<circle cx="1659" cy="987" r="5.500" fill="#fff" stroke="#222" stroke-width="1.400"/><path d="M1656 987h6M1659 984v6" stroke="#11f" stroke-width="2"/><path d="M1663 991l6 7" stroke="#111" stroke-width="2.500"/>

<!-- window frame -->
<rect x="0" y="23" width="4" height="982" fill="url(#gleft)"/>
<rect x="0" y="1003" width="1674" height="2" fill="#4e7c36"/>
</svg>
</body></html>
